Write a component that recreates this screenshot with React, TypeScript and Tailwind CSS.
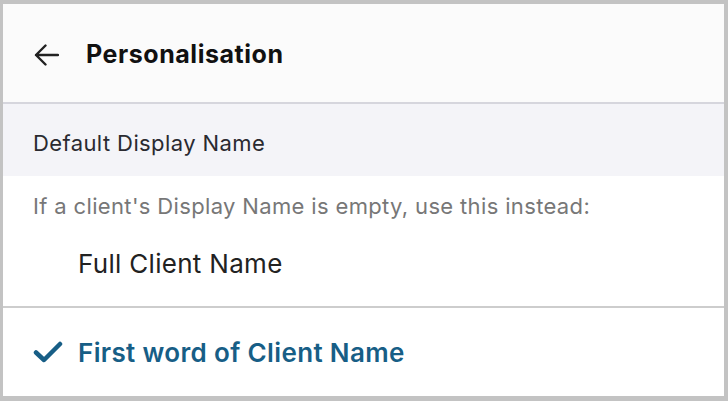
export default function App() {
  return (
    <div className="w-[728px] h-[401px] bg-[#c3c3c3] pt-[4px] pl-[3px] pr-[4px] pb-[5px] font-['Inter',sans-serif]">
      <div className="h-full bg-white flex flex-col">
        {/* Header */}
        <div className="h-[100px] shrink-0 bg-[#fbfbfb] flex items-center pl-[30px] pt-[4px] border-b-2 border-[#d6d6dd]">
          <svg width="26" height="24" viewBox="0 0 26 24" className="text-[#222]">
            <path d="M25 12H3M12.5 2.5L3 12l9.5 9.5" fill="none" stroke="currentColor" strokeWidth="2.4" strokeLinecap="round" strokeLinejoin="round" />
          </svg>
          <h1 className="ml-[27px] text-[25px] font-bold text-[#111] tracking-[0.55px]">Personalisation</h1>
        </div>

        {/* Section header */}
        <div className="h-[72px] shrink-0 bg-[#f4f4f8] flex items-center pl-[30px] pt-[7px]">
          <span className="text-[22px] text-[#2a2a30] tracking-[0.4px]">Default Display Name</span>
        </div>

        {/* Options */}
        <div className="flex-1 flex flex-col">
          <p className="pl-[30px] pt-[15px] text-[22px] leading-[30px] text-[#777] tracking-[0.35px]">
            If a client's Display Name is empty, use this instead:
          </p>
          <div className="h-[87px] shrink-0 flex items-center pl-[75px] border-b-2 border-[#cdcdcd]">
            <span className="text-[26px] text-[#222] tracking-[0.3px]">Full Client Name</span>
          </div>
          <div className="flex-1 flex items-center pl-[30px]">
            <svg width="30" height="22" viewBox="0 0 30 22" className="text-[#175e86]">
              <path d="M3 11.5 L11 19 L27 3" fill="none" stroke="currentColor" strokeWidth="4.5" strokeLinecap="round" strokeLinejoin="round" />
            </svg>
            <span className="ml-[15px] text-[26px] font-semibold text-[#175e86] tracking-[0.35px]">First word of Client Name</span>
          </div>
        </div>
      </div>
    </div>
  );
}
